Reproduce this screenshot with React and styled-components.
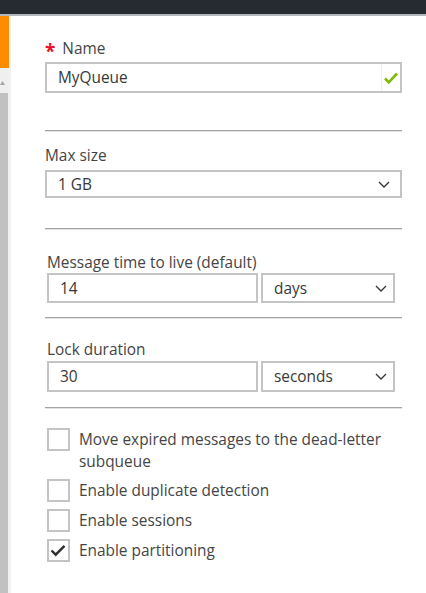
import React from "react";
import styled, { createGlobalStyle } from "styled-components";

const GlobalStyle = createGlobalStyle`
  html, body { margin: 0; padding: 0; background: #ffffff; }
  body { font-family: "Open Sans", "Noto Sans", "DejaVu Sans", sans-serif; }
  * { box-sizing: border-box; }
`;

const Page = styled.div`
  width: 426px;
  height: 593px;
  display: flex;
  flex-direction: column;
  background: #ffffff;
  overflow: hidden;
`;

const TopBar = styled.div`
  height: 16px;
  flex: none;
  background: #262b31;
  border-bottom: 2px solid #b3b8bc;
`;

const Body = styled.div`
  flex: 1;
  display: flex;
  min-height: 0;
`;

const Sidebar = styled.div`
  width: 11px;
  flex: none;
  background: #f1f1f1;
  display: flex;
  flex-direction: column;
`;

const Tile = styled.div`
  width: 9px;
  height: 52px;
  background: #ff8c00;
`;

const Track = styled.div`
  width: 8px;
  flex: 1;
  display: flex;
  flex-direction: column;
  background: #efefef;
`;

const ArrowCell = styled.div`
  height: 25px;
  padding-top: 13px;
  display: flex;
  align-items: flex-start;
`;

const Thumb = styled.div`
  flex: 1;
  background: #c1c1c1;
`;

const Main = styled.main`
  flex: 1;
  padding: 23px 24px 0 34px;
  color: #404040;
  font-size: 15.4px;
`;

const Label = styled.div`
  display: flex;
  align-items: center;
  gap: 7px;
  height: 20px;
  line-height: 20px;
  margin-top: ${(p) => p.$top || 0}px;
  padding-left: ${(p) => p.$indent || 0}px;
  color: #454545;
`;

const Required = styled.span`
  color: #e81123;
  font-size: 19px;
  font-weight: 700;
  line-height: 1;
  margin-top: 4px;
`;

const Box = styled.div`
  display: flex;
  align-items: center;
  height: ${(p) => p.$h}px;
  margin-top: ${(p) => p.$top || 0}px;
  border: 2px solid #c4c4c4;
  background: #ffffff;
  color: #383838;
  padding-left: 11px;
  padding-right: ${(p) => p.$right || 0}px;
`;

const Value = styled.span`
  flex: 1;
  white-space: nowrap;
`;

const Valid = styled.span`
  align-self: stretch;
  width: 19px;
  display: flex;
  align-items: center;
  justify-content: center;
  border-left: 1px solid #f0f0f0;
`;

const Divider = styled.div`
  height: 2px;
  margin-top: ${(p) => p.$top}px;
  border-top: 1px solid #a4a4a4;
  border-bottom: 1px solid #e2e2e2;
`;

const Pair = styled.div`
  display: grid;
  grid-template-columns: 211px 134px;
  column-gap: 3px;
  margin-left: 2px;
  margin-top: ${(p) => p.$top || 0}px;
`;

const Checks = styled.div`
  margin-top: 19px;
  margin-left: 2px;
  display: flex;
  flex-direction: column;
  gap: 7px;
`;

const CheckRow = styled.label`
  display: flex;
  align-items: flex-start;
  gap: 9px;
  color: #454545;
  line-height: 21.5px;
`;

const CheckBox = styled.span`
  width: 23px;
  height: 23px;
  flex: none;
  border: 2px solid #c4c4c4;
  background: #ffffff;
  display: flex;
  align-items: center;
  justify-content: center;
`;

const CheckText = styled.span`
  padding-top: 1px;
  flex: 1;
`;

const Chevron = () => (
  <svg width="12" height="7" viewBox="0 0 12 7">
    <path d="M1 1l5 5 5-5" fill="none" stroke="#333" strokeWidth="1.3" />
  </svg>
);

const GreenCheck = () => (
  <svg width="14" height="12" viewBox="0 0 14 12">
    <path d="M1 6.5l3.8 3.8L13 1.5" fill="none" stroke="#7fba00" strokeWidth="2.6" />
  </svg>
);

const DarkCheck = () => (
  <svg width="19" height="19" viewBox="0 0 19 19">
    <path d="M2.5 9.5l4.2 4.2L15.5 4.8" fill="none" stroke="#2f2f2f" strokeWidth="2.4" />
  </svg>
);

const ScrollUp = () => (
  <svg width="5" height="4" viewBox="0 0 5 4">
    <path d="M0 4L2.5 0 5 4z" fill="#a6a6a6" />
  </svg>
);

const options = [
  { label: "Move expired messages to the dead-letter subqueue", on: false },
  { label: "Enable duplicate detection", on: false },
  { label: "Enable sessions", on: false },
  { label: "Enable partitioning", on: true },
];

export default function App() {
  return (
    <>
      <GlobalStyle />
      <Page>
        <TopBar />
        <Body>
          <Sidebar>
            <Tile />
            <Track>
              <ArrowCell>
                <ScrollUp />
              </ArrowCell>
              <Thumb />
            </Track>
          </Sidebar>
          <Main>
            <Label>
              <Required>*</Required>
              <span>Name</span>
            </Label>
            <Box $h={31} $top={3}>
              <Value>MyQueue</Value>
              <Valid>
                <GreenCheck />
              </Valid>
            </Box>
            <Divider $top={37} />

            <Label $top={14}>Max size</Label>
            <Box $h={28} $top={4} $right={10}>
              <Value>1 GB</Value>
              <Chevron />
            </Box>
            <Divider $top={30} />

            <Label $top={23} $indent={2}>Message time to live (default)</Label>
            <Pair>
              <Box $h={30}>
                <Value>14</Value>
              </Box>
              <Box $h={30} $right={6}>
                <Value>days</Value>
                <Chevron />
              </Box>
            </Pair>
            <Divider $top={14} />

            <Label $top={21} $indent={2}>Lock duration</Label>
            <Pair $top={1}>
              <Box $h={31}>
                <Value>30</Value>
              </Box>
              <Box $h={31} $right={6}>
                <Value>seconds</Value>
                <Chevron />
              </Box>
            </Pair>
            <Divider $top={15} />

            <Checks>
              {options.map((o) => (
                <CheckRow key={o.label}>
                  <CheckBox>{o.on && <DarkCheck />}</CheckBox>
                  <CheckText>{o.label}</CheckText>
                </CheckRow>
              ))}
            </Checks>
          </Main>
        </Body>
      </Page>
    </>
  );
}
